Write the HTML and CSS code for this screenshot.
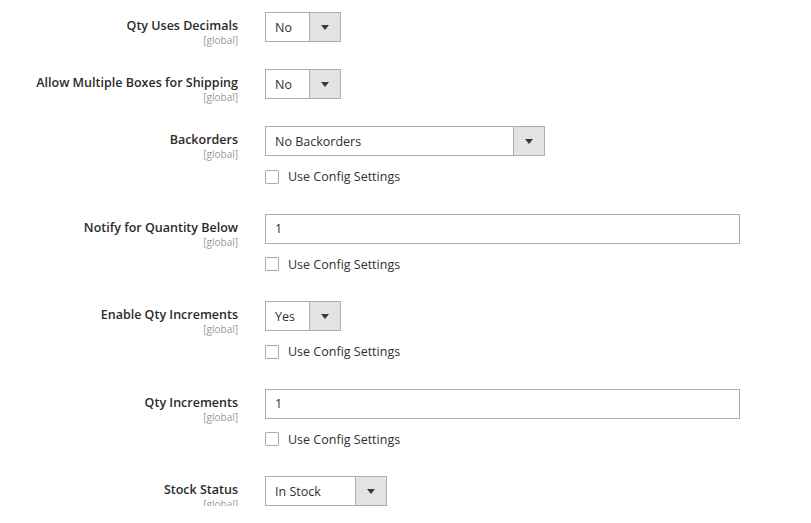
FILE: index.html
```html
<!DOCTYPE html>
<html>
<head>
<meta charset="utf-8">
<link rel="stylesheet" href="styles.css">
</head>
<body>
<div class="form">
  <div class="field">
    <div class="label"><span class="title">Qty Uses Decimals</span><span class="scope">[global]</span></div>
    <div class="control">
      <div class="select w-sm"><span class="value">No</span><span class="arrow"></span></div>
    </div>
  </div>
  <div class="field">
    <div class="label"><span class="title">Allow Multiple Boxes for Shipping</span><span class="scope">[global]</span></div>
    <div class="control">
      <div class="select w-sm"><span class="value">No</span><span class="arrow"></span></div>
    </div>
  </div>
  <div class="field">
    <div class="label"><span class="title">Backorders</span><span class="scope">[global]</span></div>
    <div class="control">
      <div class="select w-lg"><span class="value">No Backorders</span><span class="arrow"></span></div>
      <label class="check"><span class="box"></span><span>Use Config Settings</span></label>
    </div>
  </div>
  <div class="field">
    <div class="label"><span class="title">Notify for Quantity Below</span><span class="scope">[global]</span></div>
    <div class="control">
      <div class="input"><span class="value">1</span></div>
      <label class="check"><span class="box"></span><span>Use Config Settings</span></label>
    </div>
  </div>
  <div class="field">
    <div class="label"><span class="title">Enable Qty Increments</span><span class="scope">[global]</span></div>
    <div class="control">
      <div class="select w-sm"><span class="value">Yes</span><span class="arrow"></span></div>
      <label class="check"><span class="box"></span><span>Use Config Settings</span></label>
    </div>
  </div>
  <div class="field">
    <div class="label"><span class="title">Qty Increments</span><span class="scope">[global]</span></div>
    <div class="control">
      <div class="input"><span class="value">1</span></div>
      <label class="check"><span class="box"></span><span>Use Config Settings</span></label>
    </div>
  </div>
  <div class="field">
    <div class="label"><span class="title">Stock Status</span><span class="scope">[global]</span></div>
    <div class="control">
      <div class="select w-md"><span class="value">In Stock</span><span class="arrow"></span></div>
    </div>
  </div>
</div>
</body>
</html>
```

FILE: styles.css
```css
html, body {
  margin: 0;
  padding: 0;
  background: #ffffff;
}
body {
  font-family: "Open Sans", "Liberation Sans", sans-serif;
  color: #303030;
  font-size: 12.5px;
}
.form {
  padding-top: 12px;
  display: flex;
  flex-direction: column;
  gap: 27px;
}
.field {
  display: grid;
  grid-template-columns: 238px 475px;
  column-gap: 27px;
  align-items: start;
}
.label {
  box-sizing: border-box;
  height: 30px;
  display: flex;
  flex-direction: column;
  align-items: flex-end;
  padding-top: 6px;
}
.title {
  flex-shrink: 0;
  font-weight: 600;
  font-size: 12.5px;
  line-height: 16px;
  color: #2b2b2b;
}
.scope {
  flex-shrink: 0;
  font-size: 10px;
  line-height: 12px;
  color: #999999;
}
.control {
  display: flex;
  flex-direction: column;
  align-items: flex-start;
}
.select, .input {
  box-sizing: border-box;
  height: 30px;
  border: 1px solid #adadad;
  background: #ffffff;
  display: flex;
  align-items: center;
  font-size: 12.5px;
}
.value {
  flex: 1;
  padding-left: 9px;
}
.arrow {
  align-self: stretch;
  width: 30px;
  border-left: 1px solid #adadad;
  background: #e3e3e3;
  display: flex;
  align-items: center;
  justify-content: center;
}
.arrow::before {
  content: "";
  width: 0;
  height: 0;
  border-left: 4px solid transparent;
  border-right: 4px solid transparent;
  border-top: 5px solid #41362f;
}
.w-sm { width: 76px; }
.w-md { width: 122px; }
.w-lg { width: 280px; }
.input { width: 475px; }
.check {
  display: flex;
  align-items: center;
  height: 20px;
  margin-top: 10.5px;
  font-size: 12.5px;
}
.box {
  box-sizing: border-box;
  width: 14px;
  height: 14px;
  border: 1px solid #adadad;
  border-radius: 1px;
  background: #fff;
  margin-right: 9px;
}
```
